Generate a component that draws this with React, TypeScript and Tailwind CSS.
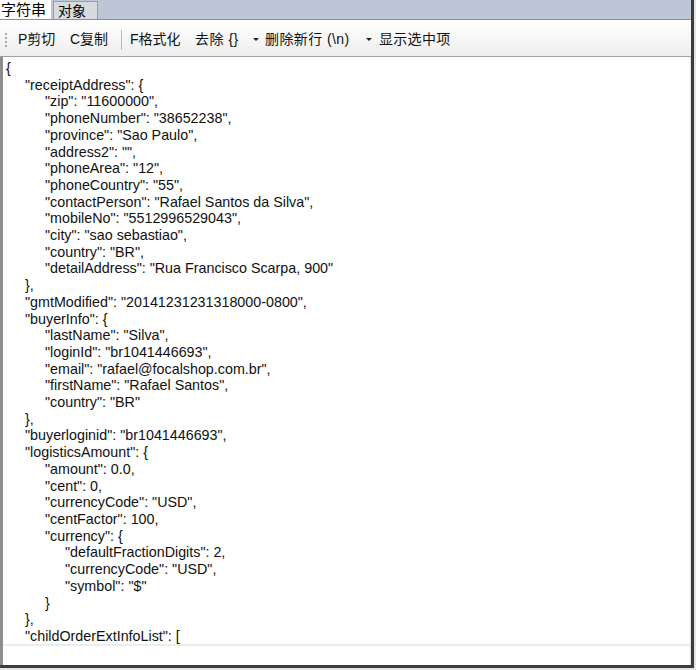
import React from "react";

const lines: [number, string][] = [
  [0, "{"],
  [1, '"receiptAddress": {'],
  [2, '"zip": "11600000",'],
  [2, '"phoneNumber": "38652238",'],
  [2, '"province": "Sao Paulo",'],
  [2, '"address2": "",'],
  [2, '"phoneArea": "12",'],
  [2, '"phoneCountry": "55",'],
  [2, '"contactPerson": "Rafael Santos da Silva",'],
  [2, '"mobileNo": "5512996529043",'],
  [2, '"city": "sao sebastiao",'],
  [2, '"country": "BR",'],
  [2, '"detailAddress": "Rua Francisco Scarpa, 900"'],
  [1, "},"],
  [1, '"gmtModified": "20141231231318000-0800",'],
  [1, '"buyerInfo": {'],
  [2, '"lastName": "Silva",'],
  [2, '"loginId": "br1041446693",'],
  [2, '"email": "rafael@focalshop.com.br",'],
  [2, '"firstName": "Rafael Santos",'],
  [2, '"country": "BR"'],
  [1, "},"],
  [1, '"buyerloginid": "br1041446693",'],
  [1, '"logisticsAmount": {'],
  [2, '"amount": 0.0,'],
  [2, '"cent": 0,'],
  [2, '"currencyCode": "USD",'],
  [2, '"centFactor": 100,'],
  [2, '"currency": {'],
  [3, '"defaultFractionDigits": 2,'],
  [3, '"currencyCode": "USD",'],
  [3, '"symbol": "$"'],
  [2, "}"],
  [1, "},"],
  [1, '"childOrderExtInfoList": ['],
];

const indentClass = ["pl-[3px]", "pl-[22px]", "pl-[42px]", "pl-[62px]"];

function Caret({ className }: { className: string }) {
  return (
    <span
      className={`inline-block shrink-0 w-0 h-0 border-l-[3px] border-r-[3px] border-t-[3px] border-l-transparent border-r-transparent border-t-[#222] ${className}`}
    />
  );
}

export default function App() {
  return (
    <div className="w-[696px] h-[670px] bg-[#e4e4e4] overflow-hidden font-['Liberation_Sans','Noto_Sans_CJK_SC',sans-serif]">
      <div className="w-[694px] h-[668px] bg-white border-r-[3px] border-b-[3px] border-[#3c3c3c] flex flex-col">
        {/* tabs */}
        <div className="h-[20px] bg-[#bdc6d7] flex items-end border-b border-[#8a8f99] shrink-0">
          <div className="h-[20px] w-[51px] bg-white flex items-center pl-[1px] text-[15px] leading-none text-black -mt-[4px]">
            字符串
          </div>
          <div className="h-[18px] w-[45px] ml-[2px] bg-[#d9dadd] border border-b-0 border-[#9a9ea6] flex items-center pl-[4px] text-[14px] leading-none text-black">
            对象
          </div>
        </div>

        {/* toolbar */}
        <div className="h-[37px] shrink-0 pt-[3px] bg-gradient-to-b from-[#ffffff] to-[#eeeeee] border-b border-[#a0a0a0] flex items-center text-[14px] text-[#111] whitespace-nowrap">
          <div className="ml-[5px] w-[13px] shrink-0 flex flex-col gap-[2px]">
            <span className="w-[2px] h-[2px] bg-[#a8a8a8]" />
            <span className="w-[2px] h-[2px] bg-[#a8a8a8]" />
            <span className="w-[2px] h-[2px] bg-[#a8a8a8]" />
            <span className="w-[2px] h-[2px] bg-[#a8a8a8]" />
          </div>
          <span className="w-[52px] shrink-0">P剪切</span>
          <span className="w-[51px] shrink-0">C复制</span>
          <span className="w-[9px] shrink-0 flex">
            <span className="w-px h-[20px] bg-[#b8b8b8]" />
          </span>
          <span className="w-[65px] shrink-0">F格式化</span>
          <span className="w-[58px] shrink-0 tracking-[0.5px]">去除 {"{}"}</span>
          <Caret className="mr-[6px]" />
          <span className="w-[101px] shrink-0 tracking-[0.4px]">删除新行 (\n)</span>
          <Caret className="mr-[7px]" />
          <span className="shrink-0 tracking-[0.3px]">显示选中项</span>
        </div>

        {/* editor */}
        <div className="flex-1 flex flex-col border-l-[3px] border-[#8d8d8d] border-r border-r-[#e2e2e2] overflow-hidden">
          <div className="flex-1 pt-[3px] text-[14.3px] leading-[16.7px] text-[#111] overflow-hidden">
            {lines.map(([lvl, text], i) => (
              <div key={i} className={`${indentClass[lvl]} whitespace-pre`}>
                {text}
              </div>
            ))}
          </div>
          <div className="h-[21px] shrink-0 border-t-2 border-[#ececec] bg-white" />
        </div>
      </div>
    </div>
  );
}
